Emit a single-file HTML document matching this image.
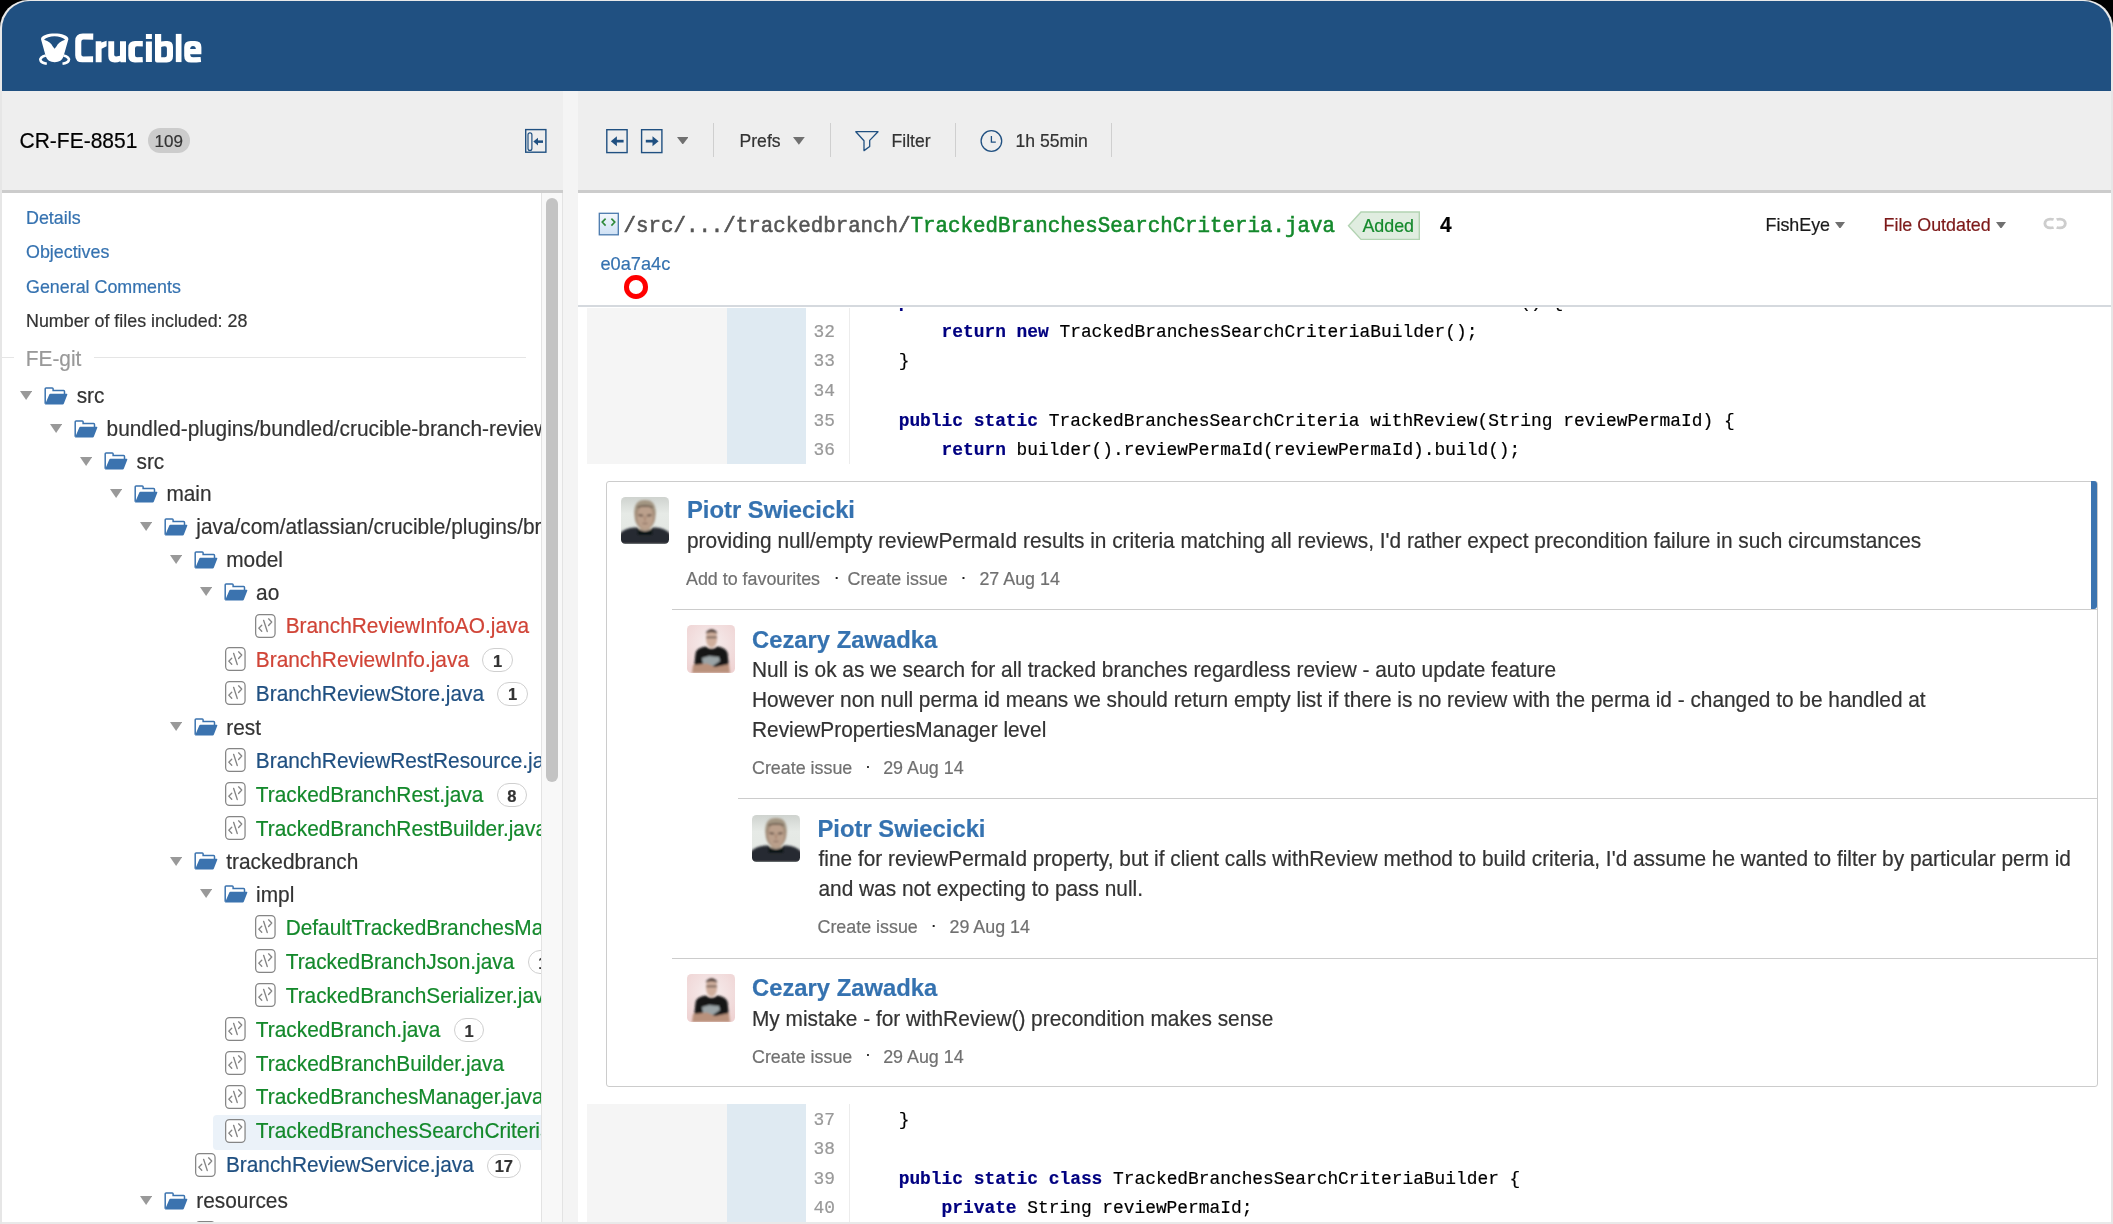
<!DOCTYPE html>
<html><head><meta charset="utf-8"><title>Crucible</title>
<style>
html,body{margin:0;padding:0;}
body{width:2113px;height:1224px;overflow:hidden;background:#000;position:relative;font-family:'Liberation Sans', sans-serif;}
b{font-weight:bold;}
#root div{-webkit-text-stroke:0.2px currentColor;}
</style></head><body>
<div id="root" style="position:absolute;left:0;top:0;width:2113px;height:1224px;will-change:transform;"><div style="position:absolute;left:0;top:0;width:2113px;height:1224px;background:#e9e9e9;border-radius:28px 28px 0 0;"></div><div style="position:absolute;left:1.50px;top:91.00px;width:2109.50px;height:1131.00px;background:#fff;"></div><div style="position:absolute;left:1.50px;top:1.00px;width:2109.50px;height:90.00px;background:#205081;border-radius:28px 28px 0 0;"></div><svg style="position:absolute;left:36.00px;top:28.00px;" width="40" height="40" viewBox="0 0 40 40">
<path d="M5,11.2 C5,3.6 32.4,3.6 32.4,11.2 L27.9,27 C26.5,32.5 23,34.2 18.7,34.2 C14.4,34.2 10.9,32.5 9.4,27 Z" fill="#fff"/>
<path d="M8,11.8 C12,7 25,7 29.1,11.8 C24.5,13.3 22,15.5 20.4,18.4 L18.6,20.8 L16.8,18.4 C15.2,15.5 12.8,13.3 8,11.8 Z" fill="#205081"/>
<path d="M9.8,27.6 C5.5,28.6 3.6,30.6 4.6,32.6 C5.6,34.6 8,35.4 10.8,35.8" fill="none" stroke="#fff" stroke-width="2.6"/>
<path d="M27.5,27.6 C31.8,28.6 33.7,30.6 32.7,32.6 C31.7,34.6 29.3,35.4 26.5,35.8" fill="none" stroke="#fff" stroke-width="2.6"/>
</svg><svg style="position:absolute;left:0.00px;top:0.00px;" width="220" height="91" viewBox="0 0 220 91"><g fill="#fff" fill-rule="evenodd">
<path d="M93.3,33.6 L82.8,33.5 Q75.2,33.5 75.2,41 L75.2,55.2 Q75.2,62.3 82.3,62.3 L93.1,62.3 L93.1,56.2 L83.3,56.4 Q81.3,56.4 81.3,54.4 L81.3,41.8 Q81.3,39.6 83.5,39.6 L93.2,39.8 Z"/>
<path d="M95.7,62.3 L95.7,41.3 L101.3,41.3 L101.3,42.6 L106.6,40.8 L106.6,46.2 L101.6,48.8 L101.6,62.3 Z"/>
<path d="M108.3,41.3 L114.2,41.3 L114.2,54.8 Q114.2,56.6 116.2,56.5 L120,55.8 L120,41.3 L126,41.3 L126,62.3 L120.6,62.3 L120.3,61.3 Q118,62.5 114.8,62.5 Q108.3,62.5 108.3,56 Z"/>
<path d="M142.8,41 L135,40.9 Q128.3,40.9 128.3,47.5 L128.3,55.8 Q128.3,62.4 135,62.4 L142.9,62.2 L142.6,57 L137,57.2 Q135,57.2 135,55.2 L135,48.2 Q135,46.2 137,46.2 L142.8,46.4 Z"/>
<path d="M145.9,33.9 L151.9,33.9 L151.9,38.9 L145.9,38.9 Z M145.9,41.4 L151.9,41.4 L151.9,62.1 L145.9,62.1 Z"/>
<path d="M155,33.9 L161.2,33.9 L161.2,41.6 Q163,41 165.5,41 L167.5,41 Q173,41 173,47 L173,56.3 Q173,62.4 166.8,62.4 L157,62.4 Q155,62.4 155,60.5 Z M161.2,46.9 Q162.5,46.2 164.6,46.2 L165,46.2 Q166.9,46.2 166.9,48.2 L166.9,55.2 Q166.9,57.2 164.9,57.2 L161.2,57.2 Z"/>
<path d="M175.8,33.9 L181.5,33.9 L181.5,62.1 L175.8,62.1 Z"/>
<path d="M190.6,40.9 L195,40.9 Q201.4,40.9 201.4,47.3 L201.4,54.2 L190.2,54.2 L190.2,55 Q190.4,57.3 193,57.3 L200.6,57 L201.1,62 Q197,62.6 191,62.6 Q184.2,62.6 184.2,55.8 L184.2,47.3 Q184.2,40.9 190.6,40.9 Z M190.1,49 L195.9,49 Q195.6,46.1 193,46.1 Q190.4,46.1 190.1,49 Z"/>
</g></svg><div style="position:absolute;left:1.50px;top:91.00px;width:561.50px;height:99.00px;background:#eeeeee;"></div><div style="position:absolute;left:1.50px;top:190.00px;width:561.50px;height:3.00px;background:#cccccc;"></div><div style="position:absolute;left:19.50px;top:130.00px;font:normal 21px/1 'Liberation Sans', sans-serif;color:#000;white-space:pre;transform:scaleY(1.05);transform-origin:0 18px;">CR-FE-8851</div><div style="position:absolute;left:148.00px;top:128.20px;width:42.00px;height:24.50px;background:#cccccc;border-radius:12.25px;"></div><div style="position:absolute;left:154.50px;top:133.00px;font:normal 17px/1 'Liberation Sans', sans-serif;color:#333;white-space:pre;">109</div><svg style="position:absolute;left:524.00px;top:127.50px;" width="24" height="26" viewBox="0 0 24 26">
<rect x="1.7" y="1.6" width="20.2" height="22.6" fill="none" stroke="#205081" stroke-width="1.4"/>
<rect x="4" y="4.8" width="3.9" height="17.6" rx="1.95" fill="none" stroke="#205081" stroke-width="1.2"/>
<path d="M9.3,13.6 L14,9.8 L14,17.4 Z" fill="#205081"/>
<rect x="13" y="12.4" width="6" height="2.5" fill="#205081"/>
</svg><div style="position:absolute;left:563.00px;top:91.00px;width:15.00px;height:1131.00px;background:#f4f4f4;"></div><div style="position:absolute;left:578.00px;top:91.00px;width:1533.00px;height:99.00px;background:#eeeeee;"></div><div style="position:absolute;left:578.00px;top:190.00px;width:1533.00px;height:3.00px;background:#cccccc;"></div><div style="position:absolute;left:713.30px;top:123.40px;width:1.20px;height:34.00px;background:#cfcfcf;"></div><div style="position:absolute;left:829.80px;top:123.40px;width:1.20px;height:34.00px;background:#cfcfcf;"></div><div style="position:absolute;left:955.00px;top:123.40px;width:1.20px;height:34.00px;background:#cfcfcf;"></div><div style="position:absolute;left:1111.10px;top:123.40px;width:1.20px;height:34.00px;background:#cfcfcf;"></div><svg style="position:absolute;left:605.00px;top:127.50px;" width="24" height="26" viewBox="0 0 24 26">
<rect x="1.8" y="1.7" width="20.3" height="22.9" fill="none" stroke="#205081" stroke-width="1.4"/>
<path d="M5.8,13.2 L11.9,8.3 L11.9,18.2 Z" fill="#205081"/>
<rect x="11" y="11.8" width="7.6" height="2.7" fill="#205081"/>
</svg><svg style="position:absolute;left:640.00px;top:127.50px;" width="24" height="26" viewBox="0 0 24 26">
<rect x="1.6" y="1.7" width="20.3" height="22.9" fill="none" stroke="#205081" stroke-width="1.4"/>
<path d="M18.6,13.2 L12.5,8.3 L12.5,18.2 Z" fill="#205081"/>
<rect x="5.8" y="11.8" width="7.6" height="2.7" fill="#205081"/>
</svg><svg style="position:absolute;left:676.50px;top:136.60px;" width="11.5" height="7.6" viewBox="0 0 11.5 7.6"><path d="M0,0 L11.5,0 L5.75,7.6 Z" fill="#707070"/></svg><div style="position:absolute;left:739.50px;top:133.00px;font:normal 17.6px/1 'Liberation Sans', sans-serif;color:#333;white-space:pre;">Prefs</div><svg style="position:absolute;left:793.00px;top:137.00px;" width="11.8" height="7.7" viewBox="0 0 11.8 7.7"><path d="M0,0 L11.8,0 L5.9,7.7 Z" fill="#707070"/></svg><svg style="position:absolute;left:854.00px;top:129.50px;" width="26" height="23" viewBox="0 0 26 23"><path d="M1.8,1.7 L24,1.7 L15.7,10.4 L15.7,16.5 L10,20.6 L10,10.8 Z" fill="none" stroke="#205081" stroke-width="1.3" stroke-linejoin="round"/></svg><div style="position:absolute;left:891.50px;top:133.00px;font:normal 17.6px/1 'Liberation Sans', sans-serif;color:#333;white-space:pre;">Filter</div><svg style="position:absolute;left:979.00px;top:128.50px;" width="25" height="25" viewBox="0 0 25 25"><circle cx="12.4" cy="12" r="10.3" fill="none" stroke="#205081" stroke-width="1.3"/><path d="M12.4,6.9 L12.4,13.1 L16.8,13.1" fill="none" stroke="#205081" stroke-width="1.3"/></svg><div style="position:absolute;left:1015.50px;top:133.00px;font:normal 17.6px/1 'Liberation Sans', sans-serif;color:#333;white-space:pre;">1h 55min</div><div style="position:absolute;left:578.00px;top:193.00px;width:1533.00px;height:113.00px;background:#fff;"></div><div style="position:absolute;left:578.00px;top:305.00px;width:1533.00px;height:2.00px;background:#d5d9de;"></div><svg style="position:absolute;left:598.00px;top:212.00px;" width="22" height="24" viewBox="0 0 22 24">
<defs><linearGradient id="fg" x1="0" y1="0" x2="0" y2="1"><stop offset="0" stop-color="#f4f8fc"/><stop offset="1" stop-color="#cfe1f5"/></linearGradient></defs>
<rect x="1.3" y="1.3" width="19" height="21.5" fill="url(#fg)" stroke="#4a79ad" stroke-width="1.3"/>
<path d="M7.6,6.6 L4.2,10.1 L7.6,13.6 M13.4,6.6 L16.8,10.1 L13.4,13.6" fill="none" stroke="#2f8a3a" stroke-width="1.6"/>
</svg><div style="position:absolute;left:623.5px;top:217px;font:20.8px/1 'Liberation Mono', monospace;color:#555;white-space:pre;-webkit-text-stroke:0.55px currentColor;transform:scaleY(1.06);transform-origin:0 15px;">/src/.../trackedbranch/<span style="color:#14892c">TrackedBranchesSearchCriteria.java</span></div><svg style="position:absolute;left:1347.00px;top:210.50px;" width="74" height="30" viewBox="0 0 74 30"><path d="M1.5,14.7 L14,1 L72.3,1 L72.3,28.4 L14,28.4 Z" fill="#e0ede0" stroke="#b2d3b2" stroke-width="1.4"/></svg><div style="position:absolute;left:1362.40px;top:218.00px;font:normal 17.87px/1 'Liberation Sans', sans-serif;color:#14892c;white-space:pre;">Added</div><div style="position:absolute;left:1440.00px;top:215.00px;font:bold 20.85px/1 'Liberation Sans', sans-serif;color:#000;white-space:pre;transform:scaleY(1.08);transform-origin:0 17px;">4</div><div style="position:absolute;left:1765.50px;top:217.00px;font:normal 17.87px/1 'Liberation Sans', sans-serif;color:#1a1a1a;white-space:pre;">FishEye</div><svg style="position:absolute;left:1835.40px;top:221.50px;" width="10" height="6.8" viewBox="0 0 10 6.8"><path d="M0,0 L10,0 L5.0,6.8 Z" fill="#707070"/></svg><div style="position:absolute;left:1883.50px;top:217.00px;font:normal 17.87px/1 'Liberation Sans', sans-serif;color:#7d1919;white-space:pre;">File Outdated</div><svg style="position:absolute;left:1996.00px;top:221.50px;" width="10" height="6.8" viewBox="0 0 10 6.8"><path d="M0,0 L10,0 L5.0,6.8 Z" fill="#707070"/></svg><svg style="position:absolute;left:2043.00px;top:215.50px;" width="25" height="15" viewBox="0 0 25 15"><path d="M10.6,3.5 C9.5,3.1 8.5,3.1 7.2,3.1 C4.2,3.1 1.9,5 1.9,7.5 C1.9,10 4.2,11.9 7.2,11.9 C8.5,11.9 9.5,11.9 10.6,11.5 M13.6,3.5 C14.7,3.1 15.7,3.1 17,3.1 C20,3.1 22.3,5 22.3,7.5 C22.3,10 20,11.9 17,11.9 C15.7,11.9 14.7,11.9 13.6,11.5" fill="none" stroke="#cdcdcd" stroke-width="2.9"/></svg><div style="position:absolute;left:600.50px;top:255.00px;font:normal 18.2px/1 'Liberation Sans', sans-serif;color:#3572b0;white-space:pre;">e0a7a4c</div><div style="position:absolute;left:624.2px;top:275.1px;width:13.6px;height:13.6px;border:5px solid #ff0000;border-radius:50%;"></div><div style="position:absolute;left:587.00px;top:308.00px;width:140.00px;height:156.00px;background:#f5f5f5;"></div><div style="position:absolute;left:727.00px;top:308.00px;width:79.00px;height:156.00px;background:#dfeaf2;"></div><div style="position:absolute;left:849.00px;top:308.00px;width:1.00px;height:156.00px;background:#ececec;"></div><div style="position:absolute;left:578px;top:308px;width:1533px;height:156px;overflow:hidden;"><div style="position:absolute;left:0;top:-308px;width:1533px;height:1300px;"><div style="position:absolute;left:235.56px;top:294px;font:17.87px/1 'Liberation Mono', monospace;color:#999;white-space:pre;">31</div><div style="position:absolute;left:277.80px;top:294px;font:17.87px/1 'Liberation Mono', monospace;color:#000;white-space:pre;">    <b style="color:#000080">public</b> <b style="color:#000080">static</b> TrackedBranchesSearchCriteriaBuilder builder() {</div><div style="position:absolute;left:235.56px;top:324px;font:17.87px/1 'Liberation Mono', monospace;color:#999;white-space:pre;">32</div><div style="position:absolute;left:277.80px;top:324px;font:17.87px/1 'Liberation Mono', monospace;color:#000;white-space:pre;">        <b style="color:#000080">return</b> <b style="color:#000080">new</b> TrackedBranchesSearchCriteriaBuilder();</div><div style="position:absolute;left:235.56px;top:353px;font:17.87px/1 'Liberation Mono', monospace;color:#999;white-space:pre;">33</div><div style="position:absolute;left:277.80px;top:353px;font:17.87px/1 'Liberation Mono', monospace;color:#000;white-space:pre;">    }</div><div style="position:absolute;left:235.56px;top:383px;font:17.87px/1 'Liberation Mono', monospace;color:#999;white-space:pre;">34</div><div style="position:absolute;left:277.80px;top:383px;font:17.87px/1 'Liberation Mono', monospace;color:#000;white-space:pre;"></div><div style="position:absolute;left:235.56px;top:413px;font:17.87px/1 'Liberation Mono', monospace;color:#999;white-space:pre;">35</div><div style="position:absolute;left:277.80px;top:413px;font:17.87px/1 'Liberation Mono', monospace;color:#000;white-space:pre;">    <b style="color:#000080">public</b> <b style="color:#000080">static</b> TrackedBranchesSearchCriteria withReview(String reviewPermaId) {</div><div style="position:absolute;left:235.56px;top:442px;font:17.87px/1 'Liberation Mono', monospace;color:#999;white-space:pre;">36</div><div style="position:absolute;left:277.80px;top:442px;font:17.87px/1 'Liberation Mono', monospace;color:#000;white-space:pre;">        <b style="color:#000080">return</b> builder().reviewPermaId(reviewPermaId).build();</div></div></div><div style="position:absolute;left:587.00px;top:1103.50px;width:140.00px;height:118.50px;background:#f5f5f5;"></div><div style="position:absolute;left:727.00px;top:1103.50px;width:79.00px;height:118.50px;background:#dfeaf2;"></div><div style="position:absolute;left:849.00px;top:1103.50px;width:1.00px;height:118.50px;background:#ececec;"></div><div style="position:absolute;left:578px;top:1103.5px;width:1533px;height:118.5px;overflow:hidden;"><div style="position:absolute;left:0;top:-1103.5px;width:1533px;height:1300px;"><div style="position:absolute;left:235.56px;top:1112px;font:17.87px/1 'Liberation Mono', monospace;color:#999;white-space:pre;">37</div><div style="position:absolute;left:277.80px;top:1112px;font:17.87px/1 'Liberation Mono', monospace;color:#000;white-space:pre;">    }</div><div style="position:absolute;left:235.56px;top:1141px;font:17.87px/1 'Liberation Mono', monospace;color:#999;white-space:pre;">38</div><div style="position:absolute;left:277.80px;top:1141px;font:17.87px/1 'Liberation Mono', monospace;color:#000;white-space:pre;"></div><div style="position:absolute;left:235.56px;top:1171px;font:17.87px/1 'Liberation Mono', monospace;color:#999;white-space:pre;">39</div><div style="position:absolute;left:277.80px;top:1171px;font:17.87px/1 'Liberation Mono', monospace;color:#000;white-space:pre;">    <b style="color:#000080">public</b> <b style="color:#000080">static</b> <b style="color:#000080">class</b> TrackedBranchesSearchCriteriaBuilder {</div><div style="position:absolute;left:235.56px;top:1200px;font:17.87px/1 'Liberation Mono', monospace;color:#999;white-space:pre;">40</div><div style="position:absolute;left:277.80px;top:1200px;font:17.87px/1 'Liberation Mono', monospace;color:#000;white-space:pre;">        <b style="color:#000080">private</b> String reviewPermaId;</div><div style="position:absolute;left:235.56px;top:1230px;font:17.87px/1 'Liberation Mono', monospace;color:#999;white-space:pre;">41</div><div style="position:absolute;left:277.80px;top:1230px;font:17.87px/1 'Liberation Mono', monospace;color:#000;white-space:pre;"></div></div></div><div style="position:absolute;left:605.50px;top:480.50px;width:1492.00px;height:606.50px;border:1px solid #cccccc;border-radius:3px;box-sizing:border-box;background:#fff;"></div><div style="position:absolute;left:2090.80px;top:480.50px;width:6.70px;height:128.50px;background:#3b73af;border-radius:0 3px 3px 0;"></div><div style="position:absolute;left:672.00px;top:608.60px;width:1425.50px;height:1.00px;background:#cccccc;"></div><div style="position:absolute;left:737.50px;top:798.20px;width:1360.00px;height:1.00px;background:#cccccc;"></div><div style="position:absolute;left:672.00px;top:957.80px;width:1425.50px;height:1.00px;background:#cccccc;"></div><svg style="position:absolute;left:621.30px;top:496.50px;" width="48" height="47" viewBox="0 0 48 47">
<defs>
<linearGradient id="pbg1" x1="0" y1="0" x2="0" y2="1"><stop offset="0" stop-color="#cfd3cf"/><stop offset="0.35" stop-color="#e6eae6"/><stop offset="0.7" stop-color="#e4e8e4"/><stop offset="1" stop-color="#d8dcd8"/></linearGradient>
<clipPath id="pcl1"><rect x="0" y="0" width="48" height="47" rx="4.5"/></clipPath>
<filter id="pbl1" x="-10%" y="-10%" width="120%" height="120%"><feGaussianBlur stdDeviation="0.9"/></filter>
</defs>
<g clip-path="url(#pcl1)">
<rect width="48" height="47" fill="url(#pbg1)"/>
<g filter="url(#pbl1)">
<path d="M19,30 L29,30 L30,37 L18,37 Z" fill="#c9b5a2"/>
<ellipse cx="24" cy="18.5" rx="10.4" ry="14.2" fill="#a08a76"/>
<ellipse cx="24.2" cy="20" rx="8.2" ry="12" fill="#bba08c"/>
<path d="M13.4,19 C12.5,6.5 17,3 24,3 C31,3 35.6,6.5 34.6,19 C33.5,11.5 30,9 24,9 C18,9 14.5,11.5 13.4,19 Z" fill="#a39582"/>
<path d="M16.5,10.5 C19,8.5 29,8.5 31.5,10.5" stroke="#5e4e40" stroke-width="1.6" fill="none"/>
<path d="M17.5,18.2 L22,18.6 M26,18.6 L30.5,18.2" stroke="#5e4c40" stroke-width="1.8"/>
<path d="M24,19 L24,24" stroke="#a88470" stroke-width="1.6"/>
<path d="M21.5,26.5 L26.5,26.5" stroke="#8e6e60" stroke-width="1.3"/>
<path d="M-2,47 L-2,38 C2,32 9,30.5 16,30.5 C19,35 29,35 32,30.5 C39,30.5 46,32 50,38 L50,47 Z" fill="#252a33"/>
<path d="M16,30.5 C19,35.5 29,35.5 32,30.5 L31,38 L17,38 Z" fill="#101216"/>
</g>
</g></svg><div style="position:absolute;left:687.00px;top:498.00px;font:bold 23.8px/1 'Liberation Sans', sans-serif;color:#3572b0;white-space:pre;transform:scaleY(1.03);transform-origin:0 20px;">Piotr Swiecicki</div><div style="position:absolute;left:687.00px;top:531.00px;font:normal 20.85px/1 'Liberation Sans', sans-serif;color:#333;white-space:pre;transform:scaleY(1.08);transform-origin:0 17px;">providing null/empty reviewPermaId results in criteria matching all reviews, I&#x27;d rather expect precondition failure in such circumstances</div><div style="position:absolute;left:686.00px;top:571.00px;font:normal 17.87px/1 'Liberation Sans', sans-serif;color:#707070;white-space:pre;">Add to favourites</div><div style="position:absolute;left:833.80px;top:569.00px;font:normal 17.87px/1 'Liberation Sans', sans-serif;color:#222;white-space:pre;">·</div><div style="position:absolute;left:847.50px;top:571.00px;font:normal 17.87px/1 'Liberation Sans', sans-serif;color:#707070;white-space:pre;">Create issue</div><div style="position:absolute;left:960.50px;top:569.00px;font:normal 17.87px/1 'Liberation Sans', sans-serif;color:#222;white-space:pre;">·</div><div style="position:absolute;left:979.40px;top:571.00px;font:normal 17.87px/1 'Liberation Sans', sans-serif;color:#707070;white-space:pre;">27 Aug 14</div><svg style="position:absolute;left:686.70px;top:624.80px;" width="48" height="48" viewBox="0 0 48 48">
<defs>
<radialGradient id="cbg2" cx="0.5" cy="0.4" r="0.7"><stop offset="0" stop-color="#f6eeee"/><stop offset="1" stop-color="#efd3d3"/></radialGradient>
<clipPath id="ccl2"><rect x="0" y="0" width="48" height="48" rx="4.5"/></clipPath>
<filter id="cbl2" x="-10%" y="-10%" width="120%" height="120%"><feGaussianBlur stdDeviation="0.8"/></filter>
</defs>
<g clip-path="url(#ccl2)">
<rect width="48" height="48" fill="url(#cbg2)"/>
<g filter="url(#cbl2)">
<ellipse cx="24.6" cy="13.5" rx="5.6" ry="9.2" fill="#cfae9c"/>
<path d="M19,9 C19,3 30.2,3 30.2,9 C28,6.5 21,6.5 19,9 Z" fill="#3a2c28"/>
<path d="M19.5,12.4 L29.7,12.4" stroke="#5a4a44" stroke-width="1.5"/>
<path d="M8.6,28 C10,23.5 15,22 19.5,21.6 C21,24.5 28,24.5 29.7,21.6 C34,22 39,23.5 40.6,28 L42,43 L7,43 Z" fill="#141414"/>
<path d="M15,33 L22,31 L32,32 L33,36 L26,41 L16,40 Z" fill="#9aa3a6"/>
<path d="M6,40 L20,38.5 L28,42 L42,39 L43,48 L5,48 Z" fill="#b9917c"/>
</g>
</g></svg><div style="position:absolute;left:752.00px;top:628.00px;font:bold 23.8px/1 'Liberation Sans', sans-serif;color:#3572b0;white-space:pre;transform:scaleY(1.03);transform-origin:0 20px;">Cezary Zawadka</div><div style="position:absolute;left:752.00px;top:660.00px;font:normal 20.85px/1 'Liberation Sans', sans-serif;color:#333;white-space:pre;transform:scaleY(1.08);transform-origin:0 17px;">Null is ok as we search for all tracked branches regardless review - auto update feature</div><div style="position:absolute;left:752.00px;top:690.00px;font:normal 20.85px/1 'Liberation Sans', sans-serif;color:#333;white-space:pre;transform:scaleY(1.08);transform-origin:0 17px;">However non null perma id means we should return empty list if there is no review with the perma id - changed to be handled at</div><div style="position:absolute;left:752.00px;top:720.00px;font:normal 20.85px/1 'Liberation Sans', sans-serif;color:#333;white-space:pre;transform:scaleY(1.08);transform-origin:0 17px;">ReviewPropertiesManager level</div><div style="position:absolute;left:752.00px;top:760.00px;font:normal 17.87px/1 'Liberation Sans', sans-serif;color:#707070;white-space:pre;">Create issue</div><div style="position:absolute;left:865.00px;top:758.00px;font:normal 17.87px/1 'Liberation Sans', sans-serif;color:#222;white-space:pre;">·</div><div style="position:absolute;left:883.20px;top:760.00px;font:normal 17.87px/1 'Liberation Sans', sans-serif;color:#707070;white-space:pre;">29 Aug 14</div><svg style="position:absolute;left:752.30px;top:815.30px;" width="48" height="47" viewBox="0 0 48 47">
<defs>
<linearGradient id="pbg3" x1="0" y1="0" x2="0" y2="1"><stop offset="0" stop-color="#cfd3cf"/><stop offset="0.35" stop-color="#e6eae6"/><stop offset="0.7" stop-color="#e4e8e4"/><stop offset="1" stop-color="#d8dcd8"/></linearGradient>
<clipPath id="pcl3"><rect x="0" y="0" width="48" height="47" rx="4.5"/></clipPath>
<filter id="pbl3" x="-10%" y="-10%" width="120%" height="120%"><feGaussianBlur stdDeviation="0.9"/></filter>
</defs>
<g clip-path="url(#pcl3)">
<rect width="48" height="47" fill="url(#pbg3)"/>
<g filter="url(#pbl3)">
<path d="M19,30 L29,30 L30,37 L18,37 Z" fill="#c9b5a2"/>
<ellipse cx="24" cy="18.5" rx="10.4" ry="14.2" fill="#a08a76"/>
<ellipse cx="24.2" cy="20" rx="8.2" ry="12" fill="#bba08c"/>
<path d="M13.4,19 C12.5,6.5 17,3 24,3 C31,3 35.6,6.5 34.6,19 C33.5,11.5 30,9 24,9 C18,9 14.5,11.5 13.4,19 Z" fill="#a39582"/>
<path d="M16.5,10.5 C19,8.5 29,8.5 31.5,10.5" stroke="#5e4e40" stroke-width="1.6" fill="none"/>
<path d="M17.5,18.2 L22,18.6 M26,18.6 L30.5,18.2" stroke="#5e4c40" stroke-width="1.8"/>
<path d="M24,19 L24,24" stroke="#a88470" stroke-width="1.6"/>
<path d="M21.5,26.5 L26.5,26.5" stroke="#8e6e60" stroke-width="1.3"/>
<path d="M-2,47 L-2,38 C2,32 9,30.5 16,30.5 C19,35 29,35 32,30.5 C39,30.5 46,32 50,38 L50,47 Z" fill="#252a33"/>
<path d="M16,30.5 C19,35.5 29,35.5 32,30.5 L31,38 L17,38 Z" fill="#101216"/>
</g>
</g></svg><div style="position:absolute;left:817.50px;top:817.00px;font:bold 23.8px/1 'Liberation Sans', sans-serif;color:#3572b0;white-space:pre;transform:scaleY(1.03);transform-origin:0 20px;">Piotr Swiecicki</div><div style="position:absolute;left:818.50px;top:849.00px;font:normal 20.85px/1 'Liberation Sans', sans-serif;color:#333;white-space:pre;transform:scaleY(1.08);transform-origin:0 17px;">fine for reviewPermaId property, but if client calls withReview method to build criteria, I&#x27;d assume he wanted to filter by particular perm id</div><div style="position:absolute;left:818.50px;top:879.00px;font:normal 20.85px/1 'Liberation Sans', sans-serif;color:#333;white-space:pre;transform:scaleY(1.08);transform-origin:0 17px;">and was not expecting to pass null.</div><div style="position:absolute;left:817.50px;top:919.00px;font:normal 17.87px/1 'Liberation Sans', sans-serif;color:#707070;white-space:pre;">Create issue</div><div style="position:absolute;left:930.80px;top:917.00px;font:normal 17.87px/1 'Liberation Sans', sans-serif;color:#222;white-space:pre;">·</div><div style="position:absolute;left:949.50px;top:919.00px;font:normal 17.87px/1 'Liberation Sans', sans-serif;color:#707070;white-space:pre;">29 Aug 14</div><svg style="position:absolute;left:687.00px;top:973.50px;" width="48" height="48" viewBox="0 0 48 48">
<defs>
<radialGradient id="cbg4" cx="0.5" cy="0.4" r="0.7"><stop offset="0" stop-color="#f6eeee"/><stop offset="1" stop-color="#efd3d3"/></radialGradient>
<clipPath id="ccl4"><rect x="0" y="0" width="48" height="48" rx="4.5"/></clipPath>
<filter id="cbl4" x="-10%" y="-10%" width="120%" height="120%"><feGaussianBlur stdDeviation="0.8"/></filter>
</defs>
<g clip-path="url(#ccl4)">
<rect width="48" height="48" fill="url(#cbg4)"/>
<g filter="url(#cbl4)">
<ellipse cx="24.6" cy="13.5" rx="5.6" ry="9.2" fill="#cfae9c"/>
<path d="M19,9 C19,3 30.2,3 30.2,9 C28,6.5 21,6.5 19,9 Z" fill="#3a2c28"/>
<path d="M19.5,12.4 L29.7,12.4" stroke="#5a4a44" stroke-width="1.5"/>
<path d="M8.6,28 C10,23.5 15,22 19.5,21.6 C21,24.5 28,24.5 29.7,21.6 C34,22 39,23.5 40.6,28 L42,43 L7,43 Z" fill="#141414"/>
<path d="M15,33 L22,31 L32,32 L33,36 L26,41 L16,40 Z" fill="#9aa3a6"/>
<path d="M6,40 L20,38.5 L28,42 L42,39 L43,48 L5,48 Z" fill="#b9917c"/>
</g>
</g></svg><div style="position:absolute;left:752.00px;top:976.00px;font:bold 23.8px/1 'Liberation Sans', sans-serif;color:#3572b0;white-space:pre;transform:scaleY(1.03);transform-origin:0 20px;">Cezary Zawadka</div><div style="position:absolute;left:752.00px;top:1009.00px;font:normal 20.85px/1 'Liberation Sans', sans-serif;color:#333;white-space:pre;transform:scaleY(1.08);transform-origin:0 17px;">My mistake - for withReview() precondition makes sense</div><div style="position:absolute;left:752.00px;top:1049.00px;font:normal 17.87px/1 'Liberation Sans', sans-serif;color:#707070;white-space:pre;">Create issue</div><div style="position:absolute;left:865.00px;top:1046.00px;font:normal 17.87px/1 'Liberation Sans', sans-serif;color:#222;white-space:pre;">·</div><div style="position:absolute;left:883.20px;top:1049.00px;font:normal 17.87px/1 'Liberation Sans', sans-serif;color:#707070;white-space:pre;">29 Aug 14</div><div style="position:absolute;left:26.00px;top:210.00px;font:normal 17.87px/1 'Liberation Sans', sans-serif;color:#3572b0;white-space:pre;">Details</div><div style="position:absolute;left:26.00px;top:244.00px;font:normal 17.87px/1 'Liberation Sans', sans-serif;color:#3572b0;white-space:pre;">Objectives</div><div style="position:absolute;left:26.00px;top:279.00px;font:normal 17.87px/1 'Liberation Sans', sans-serif;color:#3572b0;white-space:pre;">General Comments</div><div style="position:absolute;left:26.00px;top:313.00px;font:normal 17.87px/1 'Liberation Sans', sans-serif;color:#333;white-space:pre;">Number of files included: 28</div><div style="position:absolute;left:1.50px;top:357.00px;width:12.50px;height:1.00px;background:#e5e5e5;"></div><div style="position:absolute;left:93.50px;top:357.00px;width:432.00px;height:1.00px;background:#e5e5e5;"></div><div style="position:absolute;left:25.80px;top:349.00px;font:normal 20.85px/1 'Liberation Sans', sans-serif;color:#999;white-space:pre;transform:scaleY(1.08);transform-origin:0 17px;">FE-git</div><div style="position:absolute;left:1.5px;top:193px;width:539.5px;height:1029px;overflow:hidden;"><svg style="position:absolute;left:18.80px;top:197.90px;" width="12.2" height="9.0" viewBox="0 0 12.2 9.0"><path d="M0,0 L12.2,0 L6.1,9.0 Z" fill="#999"/></svg><svg style="position:absolute;left:42.70px;top:193.70px;" width="24" height="18" viewBox="0 0 24 18"><path d="M1.2,16.8 L1.2,1.8 Q1.2,0.9 2.1,0.9 L8.2,0.9 Q9.1,0.9 9.1,1.8 L9.1,3.5 L19.6,3.5 Q20.5,3.5 20.5,4.4 L20.5,7.6" fill="none" stroke="#3b73af" stroke-width="1.5"/>
<path d="M1,17.4 L5.3,7.4 Q5.6,6.8 6.3,6.8 L22.7,6.8 Q23.6,6.8 23.3,7.7 L19.9,16.6 Q19.6,17.6 18.6,17.6 L1.6,17.6 Z" fill="#3b73af"/></svg><div style="position:absolute;left:75.20px;top:193.00px;font:normal 20.85px/1 'Liberation Sans', sans-serif;color:#333;white-space:pre;transform:scaleY(1.08);transform-origin:0 17px;">src</div><svg style="position:absolute;left:48.70px;top:230.70px;" width="12.2" height="9.0" viewBox="0 0 12.2 9.0"><path d="M0,0 L12.2,0 L6.1,9.0 Z" fill="#999"/></svg><svg style="position:absolute;left:72.60px;top:226.50px;" width="24" height="18" viewBox="0 0 24 18"><path d="M1.2,16.8 L1.2,1.8 Q1.2,0.9 2.1,0.9 L8.2,0.9 Q9.1,0.9 9.1,1.8 L9.1,3.5 L19.6,3.5 Q20.5,3.5 20.5,4.4 L20.5,7.6" fill="none" stroke="#3b73af" stroke-width="1.5"/>
<path d="M1,17.4 L5.3,7.4 Q5.6,6.8 6.3,6.8 L22.7,6.8 Q23.6,6.8 23.3,7.7 L19.9,16.6 Q19.6,17.6 18.6,17.6 L1.6,17.6 Z" fill="#3b73af"/></svg><div style="position:absolute;left:105.10px;top:226.00px;font:normal 20.85px/1 'Liberation Sans', sans-serif;color:#333;white-space:pre;transform:scaleY(1.08);transform-origin:0 17px;">bundled-plugins/bundled/crucible-branch-review</div><svg style="position:absolute;left:78.60px;top:263.50px;" width="12.2" height="9.0" viewBox="0 0 12.2 9.0"><path d="M0,0 L12.2,0 L6.1,9.0 Z" fill="#999"/></svg><svg style="position:absolute;left:102.50px;top:259.30px;" width="24" height="18" viewBox="0 0 24 18"><path d="M1.2,16.8 L1.2,1.8 Q1.2,0.9 2.1,0.9 L8.2,0.9 Q9.1,0.9 9.1,1.8 L9.1,3.5 L19.6,3.5 Q20.5,3.5 20.5,4.4 L20.5,7.6" fill="none" stroke="#3b73af" stroke-width="1.5"/>
<path d="M1,17.4 L5.3,7.4 Q5.6,6.8 6.3,6.8 L22.7,6.8 Q23.6,6.8 23.3,7.7 L19.9,16.6 Q19.6,17.6 18.6,17.6 L1.6,17.6 Z" fill="#3b73af"/></svg><div style="position:absolute;left:135.00px;top:259.00px;font:normal 20.85px/1 'Liberation Sans', sans-serif;color:#333;white-space:pre;transform:scaleY(1.08);transform-origin:0 17px;">src</div><svg style="position:absolute;left:108.50px;top:296.30px;" width="12.2" height="9.0" viewBox="0 0 12.2 9.0"><path d="M0,0 L12.2,0 L6.1,9.0 Z" fill="#999"/></svg><svg style="position:absolute;left:132.40px;top:292.10px;" width="24" height="18" viewBox="0 0 24 18"><path d="M1.2,16.8 L1.2,1.8 Q1.2,0.9 2.1,0.9 L8.2,0.9 Q9.1,0.9 9.1,1.8 L9.1,3.5 L19.6,3.5 Q20.5,3.5 20.5,4.4 L20.5,7.6" fill="none" stroke="#3b73af" stroke-width="1.5"/>
<path d="M1,17.4 L5.3,7.4 Q5.6,6.8 6.3,6.8 L22.7,6.8 Q23.6,6.8 23.3,7.7 L19.9,16.6 Q19.6,17.6 18.6,17.6 L1.6,17.6 Z" fill="#3b73af"/></svg><div style="position:absolute;left:164.90px;top:291.00px;font:normal 20.85px/1 'Liberation Sans', sans-serif;color:#333;white-space:pre;transform:scaleY(1.08);transform-origin:0 17px;">main</div><svg style="position:absolute;left:138.40px;top:329.00px;" width="12.2" height="9.0" viewBox="0 0 12.2 9.0"><path d="M0,0 L12.2,0 L6.1,9.0 Z" fill="#999"/></svg><svg style="position:absolute;left:162.30px;top:324.80px;" width="24" height="18" viewBox="0 0 24 18"><path d="M1.2,16.8 L1.2,1.8 Q1.2,0.9 2.1,0.9 L8.2,0.9 Q9.1,0.9 9.1,1.8 L9.1,3.5 L19.6,3.5 Q20.5,3.5 20.5,4.4 L20.5,7.6" fill="none" stroke="#3b73af" stroke-width="1.5"/>
<path d="M1,17.4 L5.3,7.4 Q5.6,6.8 6.3,6.8 L22.7,6.8 Q23.6,6.8 23.3,7.7 L19.9,16.6 Q19.6,17.6 18.6,17.6 L1.6,17.6 Z" fill="#3b73af"/></svg><div style="position:absolute;left:194.80px;top:324.00px;font:normal 20.85px/1 'Liberation Sans', sans-serif;color:#333;white-space:pre;transform:scaleY(1.08);transform-origin:0 17px;">java/com/atlassian/crucible/plugins/branchreview</div><svg style="position:absolute;left:168.30px;top:361.70px;" width="12.2" height="9.0" viewBox="0 0 12.2 9.0"><path d="M0,0 L12.2,0 L6.1,9.0 Z" fill="#999"/></svg><svg style="position:absolute;left:192.20px;top:357.50px;" width="24" height="18" viewBox="0 0 24 18"><path d="M1.2,16.8 L1.2,1.8 Q1.2,0.9 2.1,0.9 L8.2,0.9 Q9.1,0.9 9.1,1.8 L9.1,3.5 L19.6,3.5 Q20.5,3.5 20.5,4.4 L20.5,7.6" fill="none" stroke="#3b73af" stroke-width="1.5"/>
<path d="M1,17.4 L5.3,7.4 Q5.6,6.8 6.3,6.8 L22.7,6.8 Q23.6,6.8 23.3,7.7 L19.9,16.6 Q19.6,17.6 18.6,17.6 L1.6,17.6 Z" fill="#3b73af"/></svg><div style="position:absolute;left:224.70px;top:357.00px;font:normal 20.85px/1 'Liberation Sans', sans-serif;color:#333;white-space:pre;transform:scaleY(1.08);transform-origin:0 17px;">model</div><svg style="position:absolute;left:198.20px;top:394.40px;" width="12.2" height="9.0" viewBox="0 0 12.2 9.0"><path d="M0,0 L12.2,0 L6.1,9.0 Z" fill="#999"/></svg><svg style="position:absolute;left:222.10px;top:390.20px;" width="24" height="18" viewBox="0 0 24 18"><path d="M1.2,16.8 L1.2,1.8 Q1.2,0.9 2.1,0.9 L8.2,0.9 Q9.1,0.9 9.1,1.8 L9.1,3.5 L19.6,3.5 Q20.5,3.5 20.5,4.4 L20.5,7.6" fill="none" stroke="#3b73af" stroke-width="1.5"/>
<path d="M1,17.4 L5.3,7.4 Q5.6,6.8 6.3,6.8 L22.7,6.8 Q23.6,6.8 23.3,7.7 L19.9,16.6 Q19.6,17.6 18.6,17.6 L1.6,17.6 Z" fill="#3b73af"/></svg><div style="position:absolute;left:254.60px;top:390.00px;font:normal 20.85px/1 'Liberation Sans', sans-serif;color:#333;white-space:pre;transform:scaleY(1.08);transform-origin:0 17px;">ao</div><svg style="position:absolute;left:253.20px;top:420.70px;" width="21" height="24" viewBox="0 0 21 24"><rect x="0.65" y="0.65" width="19.4" height="22.7" rx="3.8" fill="#fff" stroke="#858585" stroke-width="1.25"/>
<path d="M6.74,11.2 L3.77,14.15 L6.74,17.25 M8.6,6.33 L12.27,17.5 M13.6,4.85 L16.7,7.95 L13.6,11.45" fill="none" stroke="#858585" stroke-width="1.35" stroke-linecap="round" stroke-linejoin="round"/></svg><div style="position:absolute;left:284.20px;top:423.00px;font:normal 20.85px/1 'Liberation Sans', sans-serif;color:#d04437;white-space:pre;transform:scaleY(1.08);transform-origin:0 17px;">BranchReviewInfoAO.java</div><svg style="position:absolute;left:223.30px;top:454.40px;" width="21" height="24" viewBox="0 0 21 24"><rect x="0.65" y="0.65" width="19.4" height="22.7" rx="3.8" fill="#fff" stroke="#858585" stroke-width="1.25"/>
<path d="M6.74,11.2 L3.77,14.15 L6.74,17.25 M8.6,6.33 L12.27,17.5 M13.6,4.85 L16.7,7.95 L13.6,11.45" fill="none" stroke="#858585" stroke-width="1.35" stroke-linecap="round" stroke-linejoin="round"/></svg><div style="position:absolute;left:254.30px;top:457.00px;font:normal 20.85px/1 'Liberation Sans', sans-serif;color:#d04437;white-space:pre;transform:scaleY(1.08);transform-origin:0 17px;">BranchReviewInfo.java</div><div style="position:absolute;left:480.79px;top:455.30px;width:30.60px;height:24.00px;border:1.2px solid #cfcfcf;border-radius:12px;background:#fff;box-sizing:border-box;"></div><div style="position:absolute;left:491.49px;top:460.00px;font:bold 16.5px/1 'Liberation Sans', sans-serif;color:#333;white-space:pre;">1</div><svg style="position:absolute;left:223.30px;top:488.10px;" width="21" height="24" viewBox="0 0 21 24"><rect x="0.65" y="0.65" width="19.4" height="22.7" rx="3.8" fill="#fff" stroke="#858585" stroke-width="1.25"/>
<path d="M6.74,11.2 L3.77,14.15 L6.74,17.25 M8.6,6.33 L12.27,17.5 M13.6,4.85 L16.7,7.95 L13.6,11.45" fill="none" stroke="#858585" stroke-width="1.35" stroke-linecap="round" stroke-linejoin="round"/></svg><div style="position:absolute;left:254.30px;top:491.00px;font:normal 20.85px/1 'Liberation Sans', sans-serif;color:#205081;white-space:pre;transform:scaleY(1.08);transform-origin:0 17px;">BranchReviewStore.java</div><div style="position:absolute;left:495.83px;top:489.00px;width:30.60px;height:24.00px;border:1.2px solid #cfcfcf;border-radius:12px;background:#fff;box-sizing:border-box;"></div><div style="position:absolute;left:506.54px;top:493.00px;font:bold 16.5px/1 'Liberation Sans', sans-serif;color:#333;white-space:pre;">1</div><svg style="position:absolute;left:168.30px;top:529.40px;" width="12.2" height="9.0" viewBox="0 0 12.2 9.0"><path d="M0,0 L12.2,0 L6.1,9.0 Z" fill="#999"/></svg><svg style="position:absolute;left:192.20px;top:525.20px;" width="24" height="18" viewBox="0 0 24 18"><path d="M1.2,16.8 L1.2,1.8 Q1.2,0.9 2.1,0.9 L8.2,0.9 Q9.1,0.9 9.1,1.8 L9.1,3.5 L19.6,3.5 Q20.5,3.5 20.5,4.4 L20.5,7.6" fill="none" stroke="#3b73af" stroke-width="1.5"/>
<path d="M1,17.4 L5.3,7.4 Q5.6,6.8 6.3,6.8 L22.7,6.8 Q23.6,6.8 23.3,7.7 L19.9,16.6 Q19.6,17.6 18.6,17.6 L1.6,17.6 Z" fill="#3b73af"/></svg><div style="position:absolute;left:224.70px;top:525.00px;font:normal 20.85px/1 'Liberation Sans', sans-serif;color:#333;white-space:pre;transform:scaleY(1.08);transform-origin:0 17px;">rest</div><svg style="position:absolute;left:223.30px;top:555.20px;" width="21" height="24" viewBox="0 0 21 24"><rect x="0.65" y="0.65" width="19.4" height="22.7" rx="3.8" fill="#fff" stroke="#858585" stroke-width="1.25"/>
<path d="M6.74,11.2 L3.77,14.15 L6.74,17.25 M8.6,6.33 L12.27,17.5 M13.6,4.85 L16.7,7.95 L13.6,11.45" fill="none" stroke="#858585" stroke-width="1.35" stroke-linecap="round" stroke-linejoin="round"/></svg><div style="position:absolute;left:254.30px;top:558.00px;font:normal 20.85px/1 'Liberation Sans', sans-serif;color:#205081;white-space:pre;transform:scaleY(1.08);transform-origin:0 17px;">BranchReviewRestResource.java</div><svg style="position:absolute;left:223.30px;top:589.30px;" width="21" height="24" viewBox="0 0 21 24"><rect x="0.65" y="0.65" width="19.4" height="22.7" rx="3.8" fill="#fff" stroke="#858585" stroke-width="1.25"/>
<path d="M6.74,11.2 L3.77,14.15 L6.74,17.25 M8.6,6.33 L12.27,17.5 M13.6,4.85 L16.7,7.95 L13.6,11.45" fill="none" stroke="#858585" stroke-width="1.35" stroke-linecap="round" stroke-linejoin="round"/></svg><div style="position:absolute;left:254.30px;top:592.00px;font:normal 20.85px/1 'Liberation Sans', sans-serif;color:#14892c;white-space:pre;transform:scaleY(1.08);transform-origin:0 17px;">TrackedBranchRest.java</div><div style="position:absolute;left:495.05px;top:590.20px;width:30.60px;height:24.00px;border:1.2px solid #cfcfcf;border-radius:12px;background:#fff;box-sizing:border-box;"></div><div style="position:absolute;left:505.76px;top:595.00px;font:bold 16.5px/1 'Liberation Sans', sans-serif;color:#333;white-space:pre;">8</div><svg style="position:absolute;left:223.30px;top:623.00px;" width="21" height="24" viewBox="0 0 21 24"><rect x="0.65" y="0.65" width="19.4" height="22.7" rx="3.8" fill="#fff" stroke="#858585" stroke-width="1.25"/>
<path d="M6.74,11.2 L3.77,14.15 L6.74,17.25 M8.6,6.33 L12.27,17.5 M13.6,4.85 L16.7,7.95 L13.6,11.45" fill="none" stroke="#858585" stroke-width="1.35" stroke-linecap="round" stroke-linejoin="round"/></svg><div style="position:absolute;left:254.30px;top:626.00px;font:normal 20.85px/1 'Liberation Sans', sans-serif;color:#14892c;white-space:pre;transform:scaleY(1.08);transform-origin:0 17px;">TrackedBranchRestBuilder.java</div><svg style="position:absolute;left:168.30px;top:663.60px;" width="12.2" height="9.0" viewBox="0 0 12.2 9.0"><path d="M0,0 L12.2,0 L6.1,9.0 Z" fill="#999"/></svg><svg style="position:absolute;left:192.20px;top:659.40px;" width="24" height="18" viewBox="0 0 24 18"><path d="M1.2,16.8 L1.2,1.8 Q1.2,0.9 2.1,0.9 L8.2,0.9 Q9.1,0.9 9.1,1.8 L9.1,3.5 L19.6,3.5 Q20.5,3.5 20.5,4.4 L20.5,7.6" fill="none" stroke="#3b73af" stroke-width="1.5"/>
<path d="M1,17.4 L5.3,7.4 Q5.6,6.8 6.3,6.8 L22.7,6.8 Q23.6,6.8 23.3,7.7 L19.9,16.6 Q19.6,17.6 18.6,17.6 L1.6,17.6 Z" fill="#3b73af"/></svg><div style="position:absolute;left:224.70px;top:659.00px;font:normal 20.85px/1 'Liberation Sans', sans-serif;color:#333;white-space:pre;transform:scaleY(1.08);transform-origin:0 17px;">trackedbranch</div><svg style="position:absolute;left:198.20px;top:696.40px;" width="12.2" height="9.0" viewBox="0 0 12.2 9.0"><path d="M0,0 L12.2,0 L6.1,9.0 Z" fill="#999"/></svg><svg style="position:absolute;left:222.10px;top:692.20px;" width="24" height="18" viewBox="0 0 24 18"><path d="M1.2,16.8 L1.2,1.8 Q1.2,0.9 2.1,0.9 L8.2,0.9 Q9.1,0.9 9.1,1.8 L9.1,3.5 L19.6,3.5 Q20.5,3.5 20.5,4.4 L20.5,7.6" fill="none" stroke="#3b73af" stroke-width="1.5"/>
<path d="M1,17.4 L5.3,7.4 Q5.6,6.8 6.3,6.8 L22.7,6.8 Q23.6,6.8 23.3,7.7 L19.9,16.6 Q19.6,17.6 18.6,17.6 L1.6,17.6 Z" fill="#3b73af"/></svg><div style="position:absolute;left:254.60px;top:692.00px;font:normal 20.85px/1 'Liberation Sans', sans-serif;color:#333;white-space:pre;transform:scaleY(1.08);transform-origin:0 17px;">impl</div><svg style="position:absolute;left:253.20px;top:722.40px;" width="21" height="24" viewBox="0 0 21 24"><rect x="0.65" y="0.65" width="19.4" height="22.7" rx="3.8" fill="#fff" stroke="#858585" stroke-width="1.25"/>
<path d="M6.74,11.2 L3.77,14.15 L6.74,17.25 M8.6,6.33 L12.27,17.5 M13.6,4.85 L16.7,7.95 L13.6,11.45" fill="none" stroke="#858585" stroke-width="1.35" stroke-linecap="round" stroke-linejoin="round"/></svg><div style="position:absolute;left:284.20px;top:725.00px;font:normal 20.85px/1 'Liberation Sans', sans-serif;color:#14892c;white-space:pre;transform:scaleY(1.08);transform-origin:0 17px;">DefaultTrackedBranchesManager.java</div><svg style="position:absolute;left:253.20px;top:756.30px;" width="21" height="24" viewBox="0 0 21 24"><rect x="0.65" y="0.65" width="19.4" height="22.7" rx="3.8" fill="#fff" stroke="#858585" stroke-width="1.25"/>
<path d="M6.74,11.2 L3.77,14.15 L6.74,17.25 M8.6,6.33 L12.27,17.5 M13.6,4.85 L16.7,7.95 L13.6,11.45" fill="none" stroke="#858585" stroke-width="1.35" stroke-linecap="round" stroke-linejoin="round"/></svg><div style="position:absolute;left:284.20px;top:759.00px;font:normal 20.85px/1 'Liberation Sans', sans-serif;color:#14892c;white-space:pre;transform:scaleY(1.08);transform-origin:0 17px;">TrackedBranchJson.java</div><div style="position:absolute;left:526.12px;top:757.20px;width:30.60px;height:24.00px;border:1.2px solid #cfcfcf;border-radius:12px;background:#fff;box-sizing:border-box;"></div><div style="position:absolute;left:536.83px;top:762.00px;font:bold 16.5px/1 'Liberation Sans', sans-serif;color:#333;white-space:pre;">1</div><svg style="position:absolute;left:253.20px;top:790.40px;" width="21" height="24" viewBox="0 0 21 24"><rect x="0.65" y="0.65" width="19.4" height="22.7" rx="3.8" fill="#fff" stroke="#858585" stroke-width="1.25"/>
<path d="M6.74,11.2 L3.77,14.15 L6.74,17.25 M8.6,6.33 L12.27,17.5 M13.6,4.85 L16.7,7.95 L13.6,11.45" fill="none" stroke="#858585" stroke-width="1.35" stroke-linecap="round" stroke-linejoin="round"/></svg><div style="position:absolute;left:284.20px;top:793.00px;font:normal 20.85px/1 'Liberation Sans', sans-serif;color:#14892c;white-space:pre;transform:scaleY(1.08);transform-origin:0 17px;">TrackedBranchSerializer.java</div><svg style="position:absolute;left:223.30px;top:824.40px;" width="21" height="24" viewBox="0 0 21 24"><rect x="0.65" y="0.65" width="19.4" height="22.7" rx="3.8" fill="#fff" stroke="#858585" stroke-width="1.25"/>
<path d="M6.74,11.2 L3.77,14.15 L6.74,17.25 M8.6,6.33 L12.27,17.5 M13.6,4.85 L16.7,7.95 L13.6,11.45" fill="none" stroke="#858585" stroke-width="1.35" stroke-linecap="round" stroke-linejoin="round"/></svg><div style="position:absolute;left:254.30px;top:827.00px;font:normal 20.85px/1 'Liberation Sans', sans-serif;color:#14892c;white-space:pre;transform:scaleY(1.08);transform-origin:0 17px;">TrackedBranch.java</div><div style="position:absolute;left:452.19px;top:825.30px;width:30.60px;height:24.00px;border:1.2px solid #cfcfcf;border-radius:12px;background:#fff;box-sizing:border-box;"></div><div style="position:absolute;left:462.90px;top:830.00px;font:bold 16.5px/1 'Liberation Sans', sans-serif;color:#333;white-space:pre;">1</div><svg style="position:absolute;left:223.30px;top:858.20px;" width="21" height="24" viewBox="0 0 21 24"><rect x="0.65" y="0.65" width="19.4" height="22.7" rx="3.8" fill="#fff" stroke="#858585" stroke-width="1.25"/>
<path d="M6.74,11.2 L3.77,14.15 L6.74,17.25 M8.6,6.33 L12.27,17.5 M13.6,4.85 L16.7,7.95 L13.6,11.45" fill="none" stroke="#858585" stroke-width="1.35" stroke-linecap="round" stroke-linejoin="round"/></svg><div style="position:absolute;left:254.30px;top:861.00px;font:normal 20.85px/1 'Liberation Sans', sans-serif;color:#14892c;white-space:pre;transform:scaleY(1.08);transform-origin:0 17px;">TrackedBranchBuilder.java</div><svg style="position:absolute;left:223.30px;top:891.80px;" width="21" height="24" viewBox="0 0 21 24"><rect x="0.65" y="0.65" width="19.4" height="22.7" rx="3.8" fill="#fff" stroke="#858585" stroke-width="1.25"/>
<path d="M6.74,11.2 L3.77,14.15 L6.74,17.25 M8.6,6.33 L12.27,17.5 M13.6,4.85 L16.7,7.95 L13.6,11.45" fill="none" stroke="#858585" stroke-width="1.35" stroke-linecap="round" stroke-linejoin="round"/></svg><div style="position:absolute;left:254.30px;top:894.00px;font:normal 20.85px/1 'Liberation Sans', sans-serif;color:#14892c;white-space:pre;transform:scaleY(1.08);transform-origin:0 17px;">TrackedBranchesManager.java</div><div style="position:absolute;left:211.50px;top:922.20px;width:328.00px;height:34.60px;background:#ebf2f9;border-radius:4px 0 0 4px;"></div><svg style="position:absolute;left:223.30px;top:925.70px;" width="21" height="24" viewBox="0 0 21 24"><rect x="0.65" y="0.65" width="19.4" height="22.7" rx="3.8" fill="#fff" stroke="#858585" stroke-width="1.25"/>
<path d="M6.74,11.2 L3.77,14.15 L6.74,17.25 M8.6,6.33 L12.27,17.5 M13.6,4.85 L16.7,7.95 L13.6,11.45" fill="none" stroke="#858585" stroke-width="1.35" stroke-linecap="round" stroke-linejoin="round"/></svg><div style="position:absolute;left:254.30px;top:928.00px;font:normal 20.85px/1 'Liberation Sans', sans-serif;color:#14892c;white-space:pre;transform:scaleY(1.08);transform-origin:0 17px;">TrackedBranchesSearchCriteria.java</div><svg style="position:absolute;left:193.40px;top:959.60px;" width="21" height="24" viewBox="0 0 21 24"><rect x="0.65" y="0.65" width="19.4" height="22.7" rx="3.8" fill="#fff" stroke="#858585" stroke-width="1.25"/>
<path d="M6.74,11.2 L3.77,14.15 L6.74,17.25 M8.6,6.33 L12.27,17.5 M13.6,4.85 L16.7,7.95 L13.6,11.45" fill="none" stroke="#858585" stroke-width="1.35" stroke-linecap="round" stroke-linejoin="round"/></svg><div style="position:absolute;left:224.40px;top:962.00px;font:normal 20.85px/1 'Liberation Sans', sans-serif;color:#205081;white-space:pre;transform:scaleY(1.08);transform-origin:0 17px;">BranchReviewService.java</div><div style="position:absolute;left:485.62px;top:960.50px;width:33.40px;height:24.00px;border:1.2px solid #cfcfcf;border-radius:12px;background:#fff;box-sizing:border-box;"></div><div style="position:absolute;left:493.14px;top:965.00px;font:bold 16.5px/1 'Liberation Sans', sans-serif;color:#333;white-space:pre;">17</div><svg style="position:absolute;left:138.40px;top:1002.80px;" width="12.2" height="9.0" viewBox="0 0 12.2 9.0"><path d="M0,0 L12.2,0 L6.1,9.0 Z" fill="#999"/></svg><svg style="position:absolute;left:162.30px;top:998.60px;" width="24" height="18" viewBox="0 0 24 18"><path d="M1.2,16.8 L1.2,1.8 Q1.2,0.9 2.1,0.9 L8.2,0.9 Q9.1,0.9 9.1,1.8 L9.1,3.5 L19.6,3.5 Q20.5,3.5 20.5,4.4 L20.5,7.6" fill="none" stroke="#3b73af" stroke-width="1.5"/>
<path d="M1,17.4 L5.3,7.4 Q5.6,6.8 6.3,6.8 L22.7,6.8 Q23.6,6.8 23.3,7.7 L19.9,16.6 Q19.6,17.6 18.6,17.6 L1.6,17.6 Z" fill="#3b73af"/></svg><div style="position:absolute;left:194.80px;top:998.00px;font:normal 20.85px/1 'Liberation Sans', sans-serif;color:#333;white-space:pre;transform:scaleY(1.08);transform-origin:0 17px;">resources</div><svg style="position:absolute;left:193.40px;top:1027.60px;" width="21" height="24" viewBox="0 0 21 24"><rect x="0.65" y="0.65" width="19.4" height="22.7" rx="3.8" fill="#fff" stroke="#858585" stroke-width="1.25"/>
<path d="M6.74,11.2 L3.77,14.15 L6.74,17.25 M8.6,6.33 L12.27,17.5 M13.6,4.85 L16.7,7.95 L13.6,11.45" fill="none" stroke="#858585" stroke-width="1.35" stroke-linecap="round" stroke-linejoin="round"/></svg><div style="position:absolute;left:224.40px;top:1030.00px;font:normal 20.85px/1 'Liberation Sans', sans-serif;color:#205081;white-space:pre;transform:scaleY(1.08);transform-origin:0 17px;">atlassian-plugin.xml</div><div style="position:absolute;left:425.80px;top:1028.50px;width:30.60px;height:24.00px;border:1.2px solid #cfcfcf;border-radius:12px;background:#fff;box-sizing:border-box;"></div><div style="position:absolute;left:436.51px;top:1033.00px;font:bold 16.5px/1 'Liberation Sans', sans-serif;color:#333;white-space:pre;">1</div></div><div style="position:absolute;left:541.00px;top:193.00px;width:22.00px;height:1029.00px;background:#f8f8f8;border-left:1px solid #e3e3e3;border-right:1px solid #e3e3e3;box-sizing:border-box;"></div><div style="position:absolute;left:546.20px;top:197.80px;width:11.40px;height:584.50px;background:#c3c3c3;border-radius:6px;"></div><div style="position:absolute;left:0.00px;top:1222.00px;width:2113.00px;height:2.00px;background:#e9e9e9;"></div><div style="position:absolute;left:2111.00px;top:91.00px;width:2.00px;height:1133.00px;background:#e6e6e6;"></div><div style="position:absolute;left:0.00px;top:91.00px;width:1.50px;height:1133.00px;background:#e6e6e6;"></div></div>
</body></html>
